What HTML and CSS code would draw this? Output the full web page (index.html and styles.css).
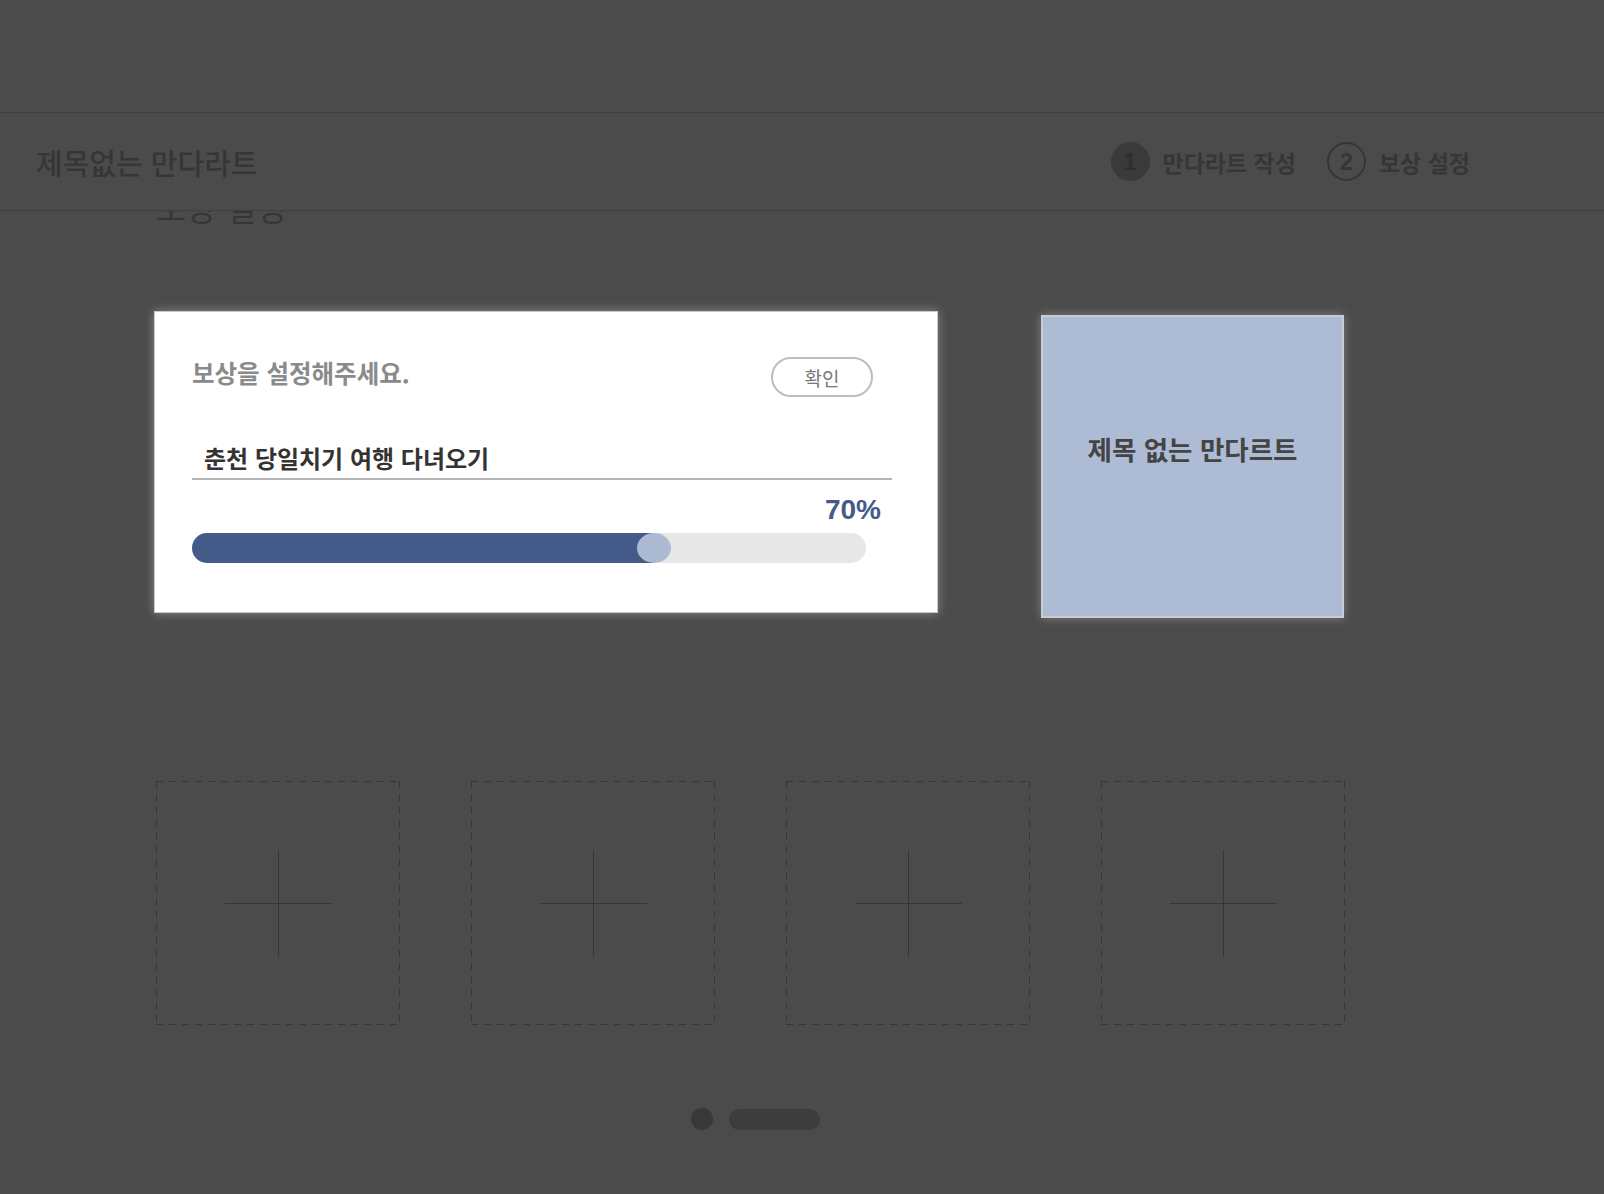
FILE: index.html
```html
<!DOCTYPE html>
<html lang="ko">
<head>
<meta charset="utf-8">
<title>보상 설정</title>
<link rel="stylesheet" href="styles.css">
</head>
<body>
<div class="topbar"></div>
<header class="header">
  <h1 class="doc-title">제목없는 만다라트</h1>
  <ol class="steps">
    <li class="step step-active"><span class="step-num">1</span><span class="step-label">만다라트 작성</span></li>
    <li class="step"><span class="step-num">2</span><span class="step-label">보상 설정</span></li>
  </ol>
</header>
<main class="content">
  <h2 class="section-title">보상 설정</h2>
  <div class="card-row">
    <section class="reward-card">
      <div class="reward-head">
        <p class="reward-prompt">보상을 설정해주세요.</p>
        <button class="btn-confirm" type="button">확인</button>
      </div>
      <div class="reward-input">춘천 당일치기 여행 다녀오기</div>
      <div class="reward-percent">70%</div>
      <div class="progress">
        <div class="progress-fill" style="width: 70%"></div>
        <div class="progress-knob" style="left: calc(70% - 27px)"></div>
      </div>
    </section>
    <div class="mandal-card">
      <span class="mandal-title">제목 없는 만다르트</span>
    </div>
  </div>
  <div class="slots">
    <div class="slot"><span class="plus"></span></div>
    <div class="slot"><span class="plus"></span></div>
    <div class="slot"><span class="plus"></span></div>
    <div class="slot"><span class="plus"></span></div>
  </div>
  <div class="pager">
    <span class="pager-dot"></span>
    <span class="pager-pill"></span>
  </div>
</main>
</body>
</html>
```

FILE: styles.css
```css
* { box-sizing: border-box; }

html, body {
  margin: 0;
  padding: 0;
}

body {
  background: #4b4b4b;
  font-family: "Noto Sans CJK KR", "Noto Sans", sans-serif;
  width: 1604px;
  height: 1194px;
  overflow: hidden;
}

.topbar {
  height: 113px;
  border-bottom: 1px solid #3f3f3f;
}

.header {
  position: relative;
  z-index: 2;
  height: 98px;
  background: #4b4b4b;
  border-bottom: 1px solid #3f3f3f;
  display: flex;
  align-items: center;
  justify-content: space-between;
  padding: 0 134px 0 36px;
}

.doc-title {
  margin: 0;
  font-size: 29px;
  font-weight: 500;
  color: #363636;
}

.steps {
  list-style: none;
  margin: 0;
  padding: 0;
  display: flex;
  align-items: center;
  gap: 31px;
}

.step {
  display: flex;
  align-items: center;
  gap: 13px;
}

.step-num {
  width: 39px;
  height: 39px;
  border-radius: 50%;
  border: 2px solid #363636;
  display: flex;
  align-items: center;
  justify-content: center;
  font-family: "Liberation Sans", sans-serif;
  font-weight: 700;
  font-size: 24px;
  color: #363636;
}

.step-active .step-num {
  background: #3a3a3a;
  border-color: #3a3a3a;
  color: #2e2e2e;
}

.step-label {
  font-size: 23px;
  font-weight: 700;
  color: #363636;
}

.content {
  position: relative;
  z-index: 1;
  margin-top: -24px;
  padding-left: 154px;
  width: 1346px;
}

.section-title {
  margin: 0 0 0 2px;
  height: 40px;
  font-size: 33px;
  line-height: 40px;
  font-weight: 400;
  color: #363636;
}

.card-row {
  margin-top: 84px;
  display: flex;
  align-items: flex-start;
  gap: 103px;
}

.reward-card {
  width: 784px;
  height: 302px;
  background: #ffffff;
  border: 1px solid #c8c8c8;
  box-shadow: 0 0 10px rgba(255, 255, 255, 0.35);
  padding: 45px 45px 0 37px;
}

.reward-head {
  display: flex;
  align-items: center;
  justify-content: space-between;
  height: 40px;
  padding-right: 19px;
}

.reward-prompt {
  margin: 0 0 10px;
  font-size: 24.5px;
  font-weight: 700;
  color: #8a8a8a;
}

.btn-confirm {
  width: 102px;
  height: 40px;
  border: 2px solid #bdbdbd;
  border-radius: 20px;
  background: #ffffff;
  font-family: "Noto Sans CJK KR", sans-serif;
  font-size: 19px;
  color: #777777;
  padding: 0;
}

.reward-input {
  margin-top: 40px;
  height: 43px;
  border-bottom: 2px solid #b4b4b4;
  padding-left: 12px;
  font-size: 24px;
  line-height: 41px;
  font-weight: 700;
  color: #333333;
}

.reward-percent {
  margin-top: 14px;
  height: 30px;
  line-height: 32px;
  text-align: right;
  padding-right: 11px;
  font-family: "Liberation Sans", Arial, sans-serif;
  font-weight: 700;
  font-size: 28px;
  color: #445b8a;
}

.progress {
  position: relative;
  margin-top: 9px;
  width: 674px;
  height: 30px;
  border-radius: 15px;
  background: #e7e7e7;
}

.progress-fill {
  height: 30px;
  border-radius: 15px 0 0 15px;
  background: #445b8a;
  max-width: 462px;
}

.progress-knob {
  position: absolute;
  top: 0;
  width: 34px;
  height: 30px;
  border-radius: 50%;
  background: #adbad3;
}

.mandal-card {
  margin-top: 4px;
  width: 303px;
  height: 303px;
  background: #aebbd5;
  border: 2px solid #c9ccd2;
  box-shadow: 0 0 10px rgba(255, 255, 255, 0.3);
  display: flex;
  justify-content: center;
  padding-top: 117px;
}

.mandal-title {
  font-size: 26.5px;
  line-height: 30px;
  height: 30px;
  font-weight: 700;
  color: #444444;
}

.slots {
  margin-top: 163px;
  margin-left: 2px;
  display: flex;
  gap: 71px;
}

.slot {
  width: 244px;
  height: 244px;
  display: flex;
  align-items: center;
  justify-content: center;
  background:
    repeating-linear-gradient(90deg, #363636 0 7px, transparent 7px 13px) left top / 100% 1px no-repeat,
    repeating-linear-gradient(90deg, #363636 0 7px, transparent 7px 13px) left bottom / 100% 1px no-repeat,
    repeating-linear-gradient(180deg, #363636 0 7px, transparent 7px 13px) left top / 1px 100% no-repeat,
    repeating-linear-gradient(180deg, #363636 0 7px, transparent 7px 13px) right top / 1px 100% no-repeat;
}

.plus {
  position: relative;
  width: 107px;
  height: 107px;
  display: block;
}

.plus::before,
.plus::after {
  content: "";
  position: absolute;
  background: #363636;
}

.plus::before {
  left: 53px;
  top: 0;
  width: 1px;
  height: 107px;
}

.plus::after {
  top: 53px;
  left: 0;
  width: 107px;
  height: 1px;
}

.pager {
  margin-top: 83px;
  display: flex;
  justify-content: center;
  align-items: center;
  gap: 16px;
  padding-left: 10px;
}

.pager-dot {
  width: 22px;
  height: 22px;
  border-radius: 50%;
  background: #383838;
}

.pager-pill {
  width: 91px;
  height: 21px;
  border-radius: 11px;
  background: #3d3d3d;
}
```
